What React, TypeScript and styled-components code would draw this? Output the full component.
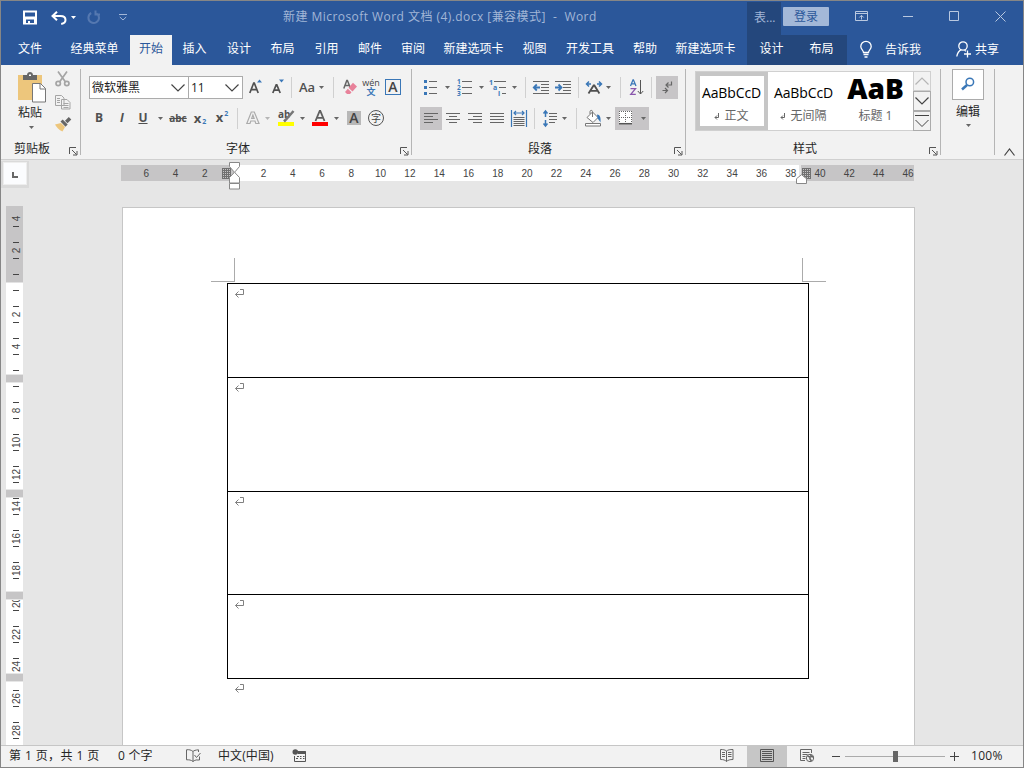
import React from "react";
import styled, { createGlobalStyle, css } from "styled-components";

const GlobalStyle = createGlobalStyle`
  * { box-sizing: border-box; }
  body {
    margin: 0;
    font-family: "Open Sans", "Noto Sans CJK SC", sans-serif;
    font-size: 12px;
    line-height: 16px;
    color: #262626;
    overflow: hidden;
  }
  svg { display: block; flex: none; overflow: visible; }
`;

const BLUE = "#2b579a";
const ACCENT = "#3a77b7";
const GREY = "#666";

/* ---------- window ---------- */

const Window = styled.div`
  width: 1024px;
  height: 768px;
  border: 1px solid #868686;
  background: #e6e6e6;
  display: flex;
  flex-direction: column;
`;

const TitleBar = styled.header`
  height: 34px;
  flex: none;
  background: ${BLUE};
  display: flex;
  align-items: center;
`;

const QuickAccess = styled.div`
  width: 282px;
  padding: 0 0 1px 21px;
  display: flex;
  align-items: center;
`;

const Spacer = styled.span<{ $w: number }>`
  width: ${(p) => p.$w}px;
  flex: none;
`;

const WindowTitle = styled.div`
  width: 464px;
  color: #a2b6d7;
  font-size: 12px;
  letter-spacing: 0.45px;
  white-space: pre;
  padding-bottom: 2px;
`;

const ContextTitle = styled.div`
  width: 34px;
  height: 33px;
  margin-top: 1px;
  padding: 8px 0 0 7px;
  background: #24477c;
  color: #a2b6d7;
`;

const SignIn = styled.button`
  margin: 0 0 3px 2px;
  width: 46px;
  height: 19px;
  padding: 0;
  border: 0;
  border-radius: 1px;
  background: #a3b8d8;
  color: ${BLUE};
  font: inherit;
  line-height: 18px;
`;

const WindowButtons = styled.div`
  display: flex;
  padding: 0 0 3px 26px;
  align-items: center;
`;

/* ---------- tabs ---------- */

const TabRow = styled.nav`
  height: 30px;
  flex: none;
  background: ${BLUE};
  display: flex;
  color: #fff;
`;

const Tab = styled.div<{ $w: number; $kind?: string }>`
  width: ${(p) => p.$w}px;
  flex: none;
  display: flex;
  justify-content: center;
  padding-top: 6px;
  white-space: nowrap;
  ${(p) => p.$kind === "active" && css`background: #f2f2f2; color: ${BLUE};`}
  ${(p) => p.$kind === "context" && css`background: #24477c;`}
`;

const TabTool = styled.div<{ $left: number; $gap: number }>`
  display: flex;
  align-items: center;
  gap: ${(p) => p.$gap}px;
  padding: 0 0 1px ${(p) => p.$left}px;
`;

/* ---------- ribbon ---------- */

const Ribbon = styled.section`
  height: 95px;
  flex: none;
  background: #f2f2f2;
  border-bottom: 1px solid #d0d0d0;
  display: flex;
  padding-top: 4px;
`;

const Group = styled.div<{ $w: number }>`
  width: ${(p) => p.$w}px;
  height: 86px;
  flex: none;
  border-right: 1px solid #b5b5b5;
  display: flex;
  flex-direction: column;
`;

const GroupBody = styled.div<{ $left?: number }>`
  height: 70px;
  flex: none;
  padding-left: ${(p) => p.$left ?? 0}px;
  display: flex;
`;

const Rows = styled.div`
  padding-top: 7px;
  display: flex;
  flex-direction: column;
`;

const Row = styled.div`
  height: 31px;
  display: flex;
  align-items: flex-start;
`;

const GroupFooter = styled.div<{ $pad: number }>`
  height: 16px;
  display: flex;
  justify-content: space-between;
  padding: 0 2px 0 ${(p) => p.$pad}px;
  line-height: 20px;
`;

const Launcher = styled.span`
  padding-top: 8px;
`;

const Cell = styled.span<{ $w: number; $on?: boolean }>`
  width: ${(p) => p.$w}px;
  height: 23px;
  flex: none;
  display: flex;
  align-items: center;
  justify-content: center;
  padding-bottom: 1px;
  background: ${(p) => (p.$on ? "#c7c5c7" : "transparent")};
`;

const Divider = styled.span`
  width: 1px;
  height: 21px;
  margin-top: 1px;
  background: #d0d0d0;
  flex: none;
`;

const Letter = styled.span<{ $size?: number; $weight?: number; $italic?: boolean; $line?: string; $color?: string }>`
  font-size: ${(p) => p.$size ?? 12}px;
  font-weight: ${(p) => p.$weight ?? 700};
  font-style: ${(p) => (p.$italic ? "italic" : "normal")};
  text-decoration: ${(p) => p.$line ?? "none"};
  color: ${(p) => p.$color ?? "#505050"};
  line-height: 16px;
  white-space: nowrap;
`;

const ScriptX = styled.span<{ $down?: boolean }>`
  display: flex;
  align-items: ${(p) => (p.$down ? "flex-end" : "flex-start")};
  gap: 1px;
  height: 18px;
  padding: ${(p) => (p.$down ? "0 0 2px" : "1px 0 0")};
  color: #505050;
  font-weight: 700;
  font-size: 13px;
  line-height: 14px;
`;

const ScriptTwo = styled.span<{ $down?: boolean }>`
  color: ${ACCENT};
  font-size: 7px;
  line-height: ${(p) => (p.$down ? 6 : 8)}px;
`;

const Combo = styled.div<{ $w: number }>`
  width: ${(p) => p.$w}px;
  height: 23px;
  margin-right: -1px;
  border: 1px solid #ababab;
  background: #fff;
  display: flex;
  align-items: center;
  justify-content: space-between;
  padding: 0 3px 0 2px;
  color: #222;
`;

const PasteButton = styled.div`
  width: 30px;
  padding-top: 3px;
  display: flex;
  flex-direction: column;
  align-items: center;
`;

const PasteLabel = styled.span`
  line-height: 18px;
  margin: 1px 4px 4px 0;
`;

const PasteCaret = styled.span`
  margin-right: 2px;
`;

const EditLabel = styled.span`
  line-height: 17px;
  margin-bottom: 4px;
`;

const ClipTools = styled.div`
  padding: 2px 0 0 8px;
  display: flex;
  flex-direction: column;
  gap: 8px;
`;

const Gallery = styled.div`
  width: 236px;
  height: 60px;
  margin-top: 2px;
  border: 1px solid #d0d0d0;
  background: #fff;
  display: flex;
`;

const StyleItem = styled.div<{ $w: number; $on?: boolean }>`
  width: ${(p) => p.$w}px;
  height: 58px;
  flex: none;
  border: 4px solid ${(p) => (p.$on ? "#c6c6c6" : "transparent")};
  display: flex;
  flex-direction: column;
  align-items: center;
`;

const StyleSample = styled.span<{ $big?: boolean }>`
  height: 32px;
  margin-left: -1px;
  color: #000;
  white-space: nowrap;
  font-size: ${(p) => (p.$big ? 28 : 14)}px;
  font-weight: ${(p) => (p.$big ? 800 : 400)};
  line-height: ${(p) => (p.$big ? 25 : 33)}px;
  letter-spacing: ${(p) => (p.$big ? 0 : -0.1)}px;
`;

const StyleName = styled.span`
  display: flex;
  align-items: center;
  gap: 4px;
  margin-left: -1px;
  color: #666;
  line-height: 16px;
`;

const Scroller = styled.div`
  margin: -1px -1px -1px auto;
  width: 18px;
  display: flex;
  flex-direction: column;
`;

const ScrollButton = styled.div<{ $off?: boolean }>`
  flex: 1;
  border: 1px solid ${(p) => (p.$off ? "#d0d0d0" : "#ababab")};
  background: #f2f2f2;
  display: flex;
  align-items: center;
  justify-content: center;
`;

const EditGroup = styled.div`
  width: 54px;
  height: 86px;
  padding-left: 1px;
  border-right: 1px solid #b5b5b5;
  display: flex;
  flex-direction: column;
  align-items: center;
`;

const FindBox = styled.div`
  width: 32px;
  height: 31px;
  margin-bottom: 3px;
  border: 1px solid #ababab;
  background: #fff;
  display: flex;
  align-items: center;
  justify-content: center;
  padding-bottom: 2px;
`;

const Collapse = styled.div`
  padding: 79px 0 0 9px;
`;

/* ---------- workspace ---------- */

const Workspace = styled.main`
  height: 585px;
  flex: none;
  display: flex;
  overflow: hidden;
`;

const RulerColumn = styled.aside`
  width: 120px;
  flex: none;
`;

const TabStop = styled.div`
  width: 28px;
  height: 27px;
  margin-top: 1px;
  padding: 1px 2px 2px 2px;
  background: #dadada;
`;

const TabStopFace = styled.div`
  height: 23px;
  border: 1px solid #eee;
  background: #fbfcfe;
  display: flex;
  align-items: center;
  justify-content: center;
  padding-top: 3px;
`;

const VRuler = styled.div`
  position: relative;
  width: 17px;
  height: 539px;
  margin: 18px 0 0 5px;
  overflow: hidden;
  background: linear-gradient(#c6c5c6 76px, #fff 77px);
`;

const VMarks = styled.div`
  margin-top: -4px;
`;

const VMark = styled.div`
  height: 32px;
  padding: 8px 0 7px 7px;
  display: flex;
  flex-direction: column;
  justify-content: space-between;
  &::before, &::after {
    content: "";
    width: 6px;
    height: 1px;
    background: #444;
  }
  &:first-child::before {
    background: transparent;
  }
`;

const VNumber = styled.span`
  width: 7px;
  height: 13px;
  display: flex;
  align-items: center;
  justify-content: center;
  font: 10px/13px "Liberation Sans", sans-serif;
  color: #444;
  transform: rotate(-90deg);
`;

const VBand = styled.div<{ $top: number }>`
  position: absolute;
  left: 0;
  top: ${(p) => p.$top}px;
  width: 17px;
  height: 9px;
  background: #c6c5c6;
  border: solid #e6e6e6;
  border-width: 1px 0;
`;

const PageColumn = styled.div`
  width: 795px;
  flex: none;
`;

const HRuler = styled.div`
  position: relative;
  height: 16px;
  width: 793px;
  margin-top: 5px;
  background: linear-gradient(90deg, #c6c5c6 113px, #fff 113px 678px, #e6e6e6 678px 680px, #c6c5c6 680px);
`;

const HMarks = styled.div`
  display: flex;
  width: 793px;
  padding-left: 10.6px;
  overflow: hidden;
`;

const HNumber = styled.span`
  width: 29.3px;
  flex: none;
  text-align: center;
  font: 10px/17px "Liberation Sans", sans-serif;
  color: #444;
`;

const Marker = styled.span<{ $x: number; $y: number }>`
  position: absolute;
  left: ${(p) => p.$x}px;
  top: ${(p) => p.$y}px;
`;

const Page = styled.article`
  width: 793px;
  height: 560px;
  margin: 26px 0 0 1px;
  padding-top: 50px;
  border: 1px solid #c6c6c6;
  background: #fff;
`;

const Crops = styled.div`
  display: flex;
  justify-content: space-between;
  width: 615px;
  margin: 0 0 1px 88px;
`;

const Crop = styled.span<{ $side: "left" | "right" }>`
  width: 24px;
  height: 24px;
  border-bottom: 1px solid #ababab;
  ${(p) => (p.$side === "left" ? "border-right" : "border-left")}: 1px solid #ababab;
`;

const Table = styled.div`
  width: 582px;
  margin-left: 104px;
  border: solid #000;
  border-width: 1px 1px 0;
`;

const TableRow = styled.div<{ $h: number }>`
  height: ${(p) => p.$h}px;
  border-bottom: 1px solid #000;
  padding: 5px 0 0 7px;
`;

const AfterTable = styled.div`
  padding: 5px 0 0 112px;
`;

/* ---------- status bar ---------- */

const StatusBar = styled.footer`
  height: 22px;
  flex: none;
  border-top: 1px solid #c6c6c6;
  background: #f2f2f2;
  display: flex;
  align-items: center;
  padding-left: 8px;
`;

const StatusText = styled.span<{ $w: number; $track?: number }>`
  width: ${(p) => p.$w}px;
  flex: none;
  white-space: pre;
  letter-spacing: ${(p) => p.$track ?? 0}px;
  line-height: 16px;
  padding-bottom: 1px;
`;

const StatusIcon = styled.span`
  padding-bottom: 2px;
`;

const StatusCell = styled.span<{ $w: number; $on?: boolean }>`
  width: ${(p) => p.$w}px;
  height: 21px;
  flex: none;
  display: flex;
  align-items: center;
  justify-content: center;
  padding-bottom: 2px;
  background: ${(p) => (p.$on ? "#c6c6c6" : "transparent")};
`;

const Zoom = styled.div`
  display: flex;
  align-items: center;
  padding: 0 12px 1px 5px;
`;

const Track = styled.div`
  width: 100px;
  height: 11px;
  margin: 0 5px 0 5px;
  display: flex;
  justify-content: center;
  background: linear-gradient(transparent 5px, #ababab 5px 6px, transparent 6px);
`;

const Thumb = styled.span`
  width: 5px;
  height: 11px;
  background: #666;
`;

/* ---------- drawings ---------- */

const Caret = ({ color = GREY }: { color?: string }) => (
  <svg width="5" height="3"><path d="M0 0h5L2.500 3z" fill={color} /></svg>
);

const Chevron = ({ up, w = 14, color = "#444" }: { up?: boolean; w?: number; color?: string }) => (
  <svg width={w} height="8" viewBox={`0 0 ${w} 8`} fill="none" stroke={color} strokeWidth="1.2">
    <path d={up ? `M.5 7.5 ${w / 2} 1 ${w - 0.5} 7.5` : `M.5 .5 ${w / 2} 7 ${w - 0.5} .5`} />
  </svg>
);

const Lines = ({ rows }: { rows: [number, number][] }) => (
  <svg width="14" height="10" fill="none" stroke={GREY}>
    {rows.map(([a, b], i) => <path key={i} d={`M${a} ${i * 3 + 0.5}H${b}`} />)}
  </svg>
);

const ReturnMark = () => (
  <svg width="9" height="10" fill="none" stroke="#808080">
    <path d="M5 .5H8.500V5.500H.5M3.500 2.500.5 5.500 3.500 8.500" />
  </svg>
);

const StyleMark = () => (
  <svg width="6" height="8" fill="none" stroke="#666">
    <path d="M4.500 1V5.500H1M3 3.500 1 5.500 3 7.500" />
  </svg>
);

const LauncherIcon = () => (
  <svg width="9" height="9" fill="none" stroke="#555">
    <path d="M.5 7V.5H7M3 3l4.500 4.500M8 4v4H4" />
  </svg>
);

const SaveIcon = () => (
  <svg width="15" height="15" fill="#fff">
    <path fillRule="evenodd" d="M1 .5h14v14H1zM3 2.500v4h10v-4zM4 9.500v3.500h2v-2h2v2h4V9.500z" />
  </svg>
);

const UndoIcon = () => (
  <svg width="16" height="14" fill="none" stroke="#fff" strokeWidth="2">
    <path d="M6 .7 1.500 5l4.500 4.300M2 5h7.500c3.500 0 5 1.800 5 4 0 2.400-1.800 3.500-4.300 4" />
  </svg>
);

const RedoIcon = () => (
  <svg width="13" height="15" fill="none" stroke="#5578b0" strokeWidth="2">
    <path d="M4.200 3A5.300 5.300 0 1 0 12 8c0-2-1-3.600-2.500-4.500M8.500 .5v4H13" />
  </svg>
);

const CustomizeIcon = () => (
  <svg width="8" height="7" fill="none" stroke="#a2b6d7">
    <path d="M0 .5h8M.8 3 4 6 7.200 3" />
  </svg>
);

const PasteIcon = () => (
  <svg width="28" height="31">
    <path d="M0 3h24v25H0z" fill="#edc67c" />
    <path d="M5 3h4c0-4 6-4 6 0h4v5H5z" fill="#666" />
    <path d="M11 2.500h2V4H11z" fill="#fff" />
    <path d="M14.500 11.500h8l5 5v13.500h-13z" fill="#fff" stroke="#777" />
    <path d="M22 11.500v5.500h5.500" fill="none" stroke="#777" />
  </svg>
);

const CutIcon = () => (
  <svg width="15" height="16" fill="none" stroke="#a5a5a5" strokeWidth="1.700">
    <path d="M3 .5 10.500 11M12 .5 4.500 11" />
    <circle cx="3.200" cy="12.500" r="2.200" /><circle cx="11.800" cy="12.500" r="2.200" />
  </svg>
);

const CopyIcon = () => (
  <svg width="16" height="15" fill="#f2f2f2" stroke="#a5a5a5">
    <path d="M.5 .5h6l2.500 2.500v7.500H.5zM6.500 4.500h5.500l3 3v6.500H6.500z" />
    <path d="M2 3.500h3M2 5.500h3M2 7.500h3M8.500 8.500h5M8.500 10.500h5M8.500 12.500h5" />
  </svg>
);

const PainterIcon = () => (
  <svg width="17" height="15">
    <path d="M0 6.500 6 5l4 4-2.500 4.500C4 12 1.500 9 0 6.500z" fill="#edc67c" />
    <path d="M5.500 3.500 10.500 8.800l2.200-2.200-5-5.200zM10 2.800 13.800 -1l2.500 2.500L12.500 5.300z" fill="#666" />
  </svg>
);

const GrowIcon = ({ shrink }: { shrink?: boolean }) => (
  <svg width="13" height="16" fill="none">
    <path d={shrink ? "M.8 14 4.200 5.800h.6l3.400 8.200M2.200 11.200h4.600" : "M.8 14 4.700 4h.6l3.900 10M2.200 10.700h5.600"} stroke="#505050" strokeWidth="1.700" />
    <path d={shrink ? "M7 .5h5L9.500 3.500z" : "M8 3.500h5L10.500 .5z"} fill={ACCENT} />
  </svg>
);

const EraserIcon = () => (
  <svg width="14" height="16">
    <path d="M.8 9.500 3.800 1.500h.6L7 8M2.200 6.500h4" fill="none" stroke="#666" strokeWidth="1.500" />
    <path d="M10 3.800 14 7.500l-4.500 5L5.500 8.800z" fill="#e8829a" />
    <path d="M4.800 9.800 8.500 13.200 7 15H4l-2-2z" fill="#e8829a" />
  </svg>
);

const Pinyin = styled.span`
  display: flex;
  flex-direction: column;
  align-items: center;
  color: #444;
  font-size: 9px;
  line-height: 9px;
`;

const PinyinHan = styled.span`
  color: ${ACCENT};
  font-size: 9px;
  font-weight: 700;
  line-height: 9px;
`;

const BoxedLetter = styled.span<{ $kind: "box" | "shade" | "circle" }>`
  display: flex;
  align-items: center;
  justify-content: center;
  width: 16px;
  height: 16px;
  font-size: 14px;
  font-weight: 600;
  line-height: 14px;
  color: #444;
  ${(p) => p.$kind === "box" && css`border: 1px solid ${ACCENT};`}
  ${(p) => p.$kind === "shade" && css`width: 14px; height: 14px; background: #b8b8b8;`}
  ${(p) => p.$kind === "circle" && css`border: 1px solid #555; border-radius: 8px; font-size: 10px; font-weight: 400;`}
`;

const ColourBar = styled.span<{ $color: string }>`
  width: 16px;
  height: 16px;
  border-bottom: 4px solid ${(p) => p.$color};
  display: flex;
  justify-content: center;
`;

const FontA = () => (
  <svg width="12" height="11" fill="none" stroke="#606060" strokeWidth="1.800">
    <path d="M1.500 11 5.700 1h.6l4.200 10M3 7.800h6" />
  </svg>
);

const HighlightIcon = () => (
  <svg width="16" height="12">
    <text x="0" y="8" fontSize="10" fontWeight="700" fill="#505050">ab</text>
    <path d="M15.500 1 9 8.500 6 11.500" stroke="#777" strokeWidth="2.500" fill="none" />
  </svg>
);

const OutlineA = () => (
  <svg width="14" height="14" fill="none" stroke="#ababab" strokeWidth="1.200">
    <path d="M.8 12.500 5.300 1h3l4.700 11.500H9.800L9 10H4.800L4 12.500zM5.700 7.500h2.400L6.900 4z" />
  </svg>
);

const BulletsIcon = () => (
  <svg width="13" height="15" shapeRendering="crispEdges">
    {[1, 7, 13].map((y) => (
      <g key={y}><rect x="0" y={y - 1} width="3" height="3" fill={ACCENT} /><path d={`M5 ${y + 0.5}h8`} stroke={GREY} /></g>
    ))}
  </svg>
);

const NumbersIcon = () => (
  <svg width="15" height="17">
    {[1, 2, 3].map((n) => (
      <g key={n}>
        <text x="0" y={n * 6 - 1} fontSize="6.500" fontWeight="700" fill={ACCENT}>{n}</text>
        <path d={`M5 ${n * 6 - 3.5}h10`} stroke={GREY} />
      </g>
    ))}
  </svg>
);

const MultiIcon = () => (
  <svg width="17" height="17">
    <g fontSize="7" fontWeight="700" fill={ACCENT}>
      <text x="0" y="5.500">1</text><text x="4" y="11">a</text><text x="9" y="17">i</text>
    </g>
    <path d="M5 2.500h12M10 8.500h7M13 14.500h4" stroke={GREY} />
  </svg>
);

const IndentIcon = ({ right }: { right?: boolean }) => (
  <svg width="16" height="13" fill="none">
    <path d="M0 .5h16M8 3.500h8M8 6.500h8M8 9.500h8M0 12.500h16" stroke={GREY} />
    <path d={right ? "M0 6.500h6M3.500 3.500l3 3-3 3" : "M7 6.500H1M3.800 3.500l-3 3 3 3"} stroke={ACCENT} strokeWidth="1.800" />
  </svg>
);

const AsianLayoutIcon = () => (
  <svg width="16" height="13" fill="none">
    <path d="M2.500 12.500 7.600 4.500h.8l5 8M4.500 9.800h7" stroke="#505050" strokeWidth="1.800" />
    <path d="M1 3h4M3 .5.500 3 3 5.500M15 3h-4M13 .5 15.500 3 13 5.500" stroke={ACCENT} strokeWidth="1.500" />
  </svg>
);

const SortIcon = () => (
  <svg width="14" height="17" fill="none">
    <path d="M.5 7 3 .8h.4L6 7M1.500 4.800h3.500" stroke={ACCENT} strokeWidth="1.300" />
    <path d="M.5 9.700h5L.8 15.300h5" stroke="#8a57ad" strokeWidth="1.300" />
    <path d="M10.500 1v14M7.800 12l2.700 3 2.700-3" stroke="#555" />
  </svg>
);

const MarksIcon = () => (
  <svg width="11" height="13" fill="none" stroke="#666" strokeWidth="1.200">
    <path d="M9.500 .5v3.500H4M6.500 1.500 4 4l2.500 2.500M.5 9.500h5M3 7l2.500 2.500L3 12" />
  </svg>
);

const DistributeIcon = () => (
  <svg width="16" height="17" fill="none">
    <path d="M.5 0v17M15.500 0v17M3 3h10M5 1 3 3l2 2M11 1l2 2-2 2" stroke={ACCENT} strokeWidth="1.200" />
    <path d="M2.500 7.500h11M2.500 9.500h11M2.500 11.500h11M2.500 13.500h11M2.500 15.500h11" stroke={GREY} />
  </svg>
);

const SpacingIcon = () => (
  <svg width="14" height="17" fill="none">
    <path d="M2.500 1v6M.5 3.500l2-2.500 2 2.500M2.500 10v6M.5 13.500l2 2.500 2-2.500" stroke={ACCENT} strokeWidth="1.500" />
    <path d="M6 3.500h8M6 6.500h8M6 9.500h8M6 12.500h6" stroke={GREY} />
  </svg>
);

const ShadingIcon = () => (
  <svg width="17" height="17" fill="none" stroke="#777">
    <path d="M2 7.500 7.500 2 13 7.500 8 12.500z" fill="#fff" />
    <path d="M7.500 7V1.500c0-1.500-2.500-1.500-2.500 0V4" />
    <path d="M12 4.500c3 0 4 3 3.500 8-1-2-2-3-3-4z" fill={ACCENT} stroke="none" />
    <path d="M.5 13.500h15v2.500H.5z" fill="#fff" />
  </svg>
);

const BordersIcon = () => (
  <svg width="14" height="14" fill="none">
    <path d="M0 0h13v13H0z" fill="#fff" />
    <path d="M.5 0v13M6.500 0v13M12.500 0v13M0 .5h13M0 6.500h13" stroke="#666" strokeDasharray="1 1" />
    <path d="M0 12.700h13" stroke="#555" strokeWidth="1.500" />
  </svg>
);

const FindIcon = () => (
  <svg width="14" height="14" fill="none" stroke={ACCENT}>
    <circle cx="8.800" cy="5" r="3.800" strokeWidth="1.500" />
    <path d="M6 8 1 12.500" strokeWidth="2.500" />
  </svg>
);

const RibbonModeIcon = () => (
  <svg width="13" height="11" fill="none" stroke="#b9c8e0">
    <path d="M.5 .5h12v9H.5zM.5 2.500h12M6.500 8.500V4.500M4.300 6.500 6.500 4.300l2.200 2.200" />
  </svg>
);

const BulbIcon = () => (
  <svg width="12" height="17" fill="none" stroke="#fff" strokeWidth="1.300">
    <path d="M3.500 11.500C3.500 9 .8 8.500.8 5.500a5.200 5.200 0 0 1 10.400 0c0 3-2.700 3.500-2.700 6zM3.500 13.500h5M4.500 16h3" />
  </svg>
);

const ShareIcon = () => (
  <svg width="15" height="17" fill="none" stroke="#fff" strokeWidth="1.300">
    <circle cx="7" cy="5" r="4.200" />
    <path d="M.8 15.500c.5-3 2-5.500 4.500-6.800M8.500 9.200l1.500 1M11.500 9.500v7M8 13h7" />
  </svg>
);

const IndentMarker = () => (
  <svg width="11" height="28" fill="#fff" stroke="#888">
    <path d="M.5 .5h10v4L6 9.800v1l4.500 4.700v5.500H.5v-5.500L5 10.800v-1L.5 4.500zM.5 21.500h10v5.500H.5z" />
  </svg>
);

const RightMarker = () => (
  <svg width="11" height="10" fill="#fff" stroke="#888"><path d="M5.500 .7l5 4v4.800H.5V4.700z" /></svg>
);

const GridMarker = () => (
  <svg width="9" height="11" stroke="#707070" shapeRendering="crispEdges">
    <path d="M.5 0v11M2.500 0v11M4.500 0v11M6.500 0v11M8.500 0v11M0 .5h9M0 2.500h9M0 4.500h9M0 6.500h9M0 8.500h9M0 10.500h9" />
  </svg>
);

const ProofIcon = () => (
  <svg width="15" height="13" fill="none" stroke="#666">
    <path d="M7 2.500C5 .8 3 .5.500 .8v10c2.500 0 4.500 0 6.500 1.700 1-1 2.500-1.500 4-1.700M7 2.500v10M7 2.500C8 1.500 9.500 1 12.500 .8V3M8.500 6l2 2.500L14.500 4M13.500 7.500v3.500H11" />
  </svg>
);

const MacroIcon = () => (
  <svg width="14" height="13" fill="none" stroke="#555">
    <path d="M6 2.500h7.500v10h-11V7M6 4.500h7.500" />
    <path d="M6 3h7.500" strokeWidth="2" />
    <path d="M5 7.500h2M8 7.500h1.500M11 7.500h1.500M4 9.500h2M8 9.500h1.500M11 9.500h1.500" />
    <circle cx="3.300" cy="3" r="2.800" fill="#555" stroke="none" />
  </svg>
);

const ReadIcon = () => (
  <svg width="14" height="13" fill="none" stroke="#666">
    <path d="M6.500 2C5 .8 3 .5.500 .5v10c3 0 4.500 .5 6 2 1.500-1.500 3.500-2 6.500-2V.5c-3 0-5 .3-6.500 1.500v10.500M2 3.500h3M2 5.500h3M2 7.500h3M8 3.500h3.500M8 5.500h3.500M8 7.500h3.500" />
  </svg>
);

const PrintIcon = () => (
  <svg width="14" height="13" fill="none" stroke="#555">
    <path d="M.5 .5h13v12H.5zM2 2.500h10M2 4.500h10M2 6.500h10M2 8.500h10M2 10.500h10" />
  </svg>
);

const WebIcon = () => (
  <svg width="14" height="13" fill="none" stroke="#666">
    <path d="M11.500 4V.5H.5v11H5M2.500 3.500h7M2.500 5.500h5M2.500 7.500h3M2.500 9.500h3" />
    <circle cx="10" cy="9" r="3.700" />
    <path d="M7.500 7l2.500 1v2l1.500 2M10.500 5.500l1 2 2 .5" strokeWidth="1.600" />
  </svg>
);

/* ---------- data ---------- */

const tabs: [string, number, string?][] = [
  ["文件", 58], ["经典菜单", 71], ["开始", 42, "active"], ["插入", 45], ["设计", 44], ["布局", 43],
  ["引用", 45], ["邮件", 42], ["审阅", 44], ["新建选项卡", 77], ["视图", 45], ["开发工具", 66],
  ["帮助", 44], ["新建选项卡", 77], ["", 3], ["设计", 49, "context"], ["布局", 51, "context"],
];

const hNumbers = [6, 4, 2, 0, ...Array.from({ length: 23 }, (_, i) => (i + 1) * 2)];
const vNumbers = [4, 2, 0, ...Array.from({ length: 14 }, (_, i) => (i + 1) * 2)];
const rowHeights = [94, 114, 103, 84];

const Footer = ({ name, pad }: { name: string; pad: number }) => (
  <GroupFooter $pad={pad}>
    <span>{name}</span>
    <Launcher><LauncherIcon /></Launcher>
  </GroupFooter>
);

export default function App() {
  return (
    <Window>
      <GlobalStyle />
      <TitleBar>
        <QuickAccess>
          <SaveIcon /><Spacer $w={14} /><UndoIcon /><Spacer $w={4} /><Caret color="#fff" />
          <Spacer $w={11} /><RedoIcon /><Spacer $w={19} /><CustomizeIcon />
        </QuickAccess>
        <WindowTitle>新建 Microsoft Word 文档 (4).docx [兼容模式]  -  Word</WindowTitle>
        <ContextTitle>表...</ContextTitle>
        <SignIn>登录</SignIn>
        <WindowButtons>
          <RibbonModeIcon /><Spacer $w={35} />
          <svg width="11" height="11" stroke="#b9c8e0"><path d="M0 5.500h10" /></svg><Spacer $w={35} />
          <svg width="11" height="11" stroke="#b9c8e0" fill="none"><path d="M.5 .5h9v9H.5z" /></svg><Spacer $w={35} />
          <svg width="11" height="11" stroke="#b9c8e0"><path d="M.5 .5l10 10M10.500 .5l-10 10" /></svg>
        </WindowButtons>
      </TitleBar>

      <TabRow>
        {tabs.map(([name, w, kind], i) => <Tab key={i} $w={w} $kind={kind}>{name}</Tab>)}
        <TabTool $left={13} $gap={13}><BulbIcon /><span>告诉我</span></TabTool>
        <TabTool $left={35} $gap={4}><ShareIcon /><span>共享</span></TabTool>
      </TabRow>

      <Ribbon>
        <Group $w={80}>
          <GroupBody $left={16}>
            <PasteButton>
              <PasteIcon />
              <PasteLabel>粘贴</PasteLabel>
              <PasteCaret><Caret /></PasteCaret>
            </PasteButton>
            <ClipTools><CutIcon /><CopyIcon /><PainterIcon /></ClipTools>
          </GroupBody>
          <Footer name="剪贴板" pad={13} />
        </Group>

        <Group $w={331}>
          <GroupBody $left={8}>
            <Rows>
              <Row>
                <Combo $w={100}><span>微软雅黑</span><Chevron /></Combo>
                <Combo $w={55}><span>11</span><Chevron /></Combo>
                <Spacer $w={1} />
                <Cell $w={24}><GrowIcon /></Cell>
                <Cell $w={22}><GrowIcon shrink /></Cell>
                <Spacer $w={2} /><Divider /><Spacer $w={5} />
                <Cell $w={20}><Letter $size={13} $weight={600}>Aa</Letter></Cell>
                <Cell $w={9}><Caret /></Cell>
                <Spacer $w={7} /><Divider /><Spacer $w={6} />
                <Cell $w={20}><EraserIcon /></Cell>
                <Spacer $w={1} />
                <Cell $w={20}><Pinyin>wén<PinyinHan>文</PinyinHan></Pinyin></Cell>
                <Spacer $w={4} />
                <Cell $w={16}><BoxedLetter $kind="box">A</BoxedLetter></Cell>
              </Row>
              <Row>
                <Cell $w={20}><Letter>B</Letter></Cell>
                <Spacer $w={2} />
                <Cell $w={22}><Letter $italic>I</Letter></Cell>
                <Cell $w={20}><Letter $line="underline">U</Letter></Cell>
                <Spacer $w={1} />
                <Cell $w={12}><Caret /></Cell>
                <Cell $w={24}><Letter $size={10} $line="line-through">abc</Letter></Cell>
                <Cell $w={20}><ScriptX $down>x<ScriptTwo $down>2</ScriptTwo></ScriptX></Cell>
                <Spacer $w={2} />
                <Cell $w={20}><ScriptX>x<ScriptTwo>2</ScriptTwo></ScriptX></Cell>
                <Spacer $w={5} /><Divider /><Spacer $w={5} />
                <Cell $w={20}><OutlineA /></Cell>
                <Cell $w={9}><Caret color="#b5b5b5" /></Cell>
                <Spacer $w={4} />
                <Cell $w={20}><ColourBar $color="#ffff00"><HighlightIcon /></ColourBar></Cell>
                <Cell $w={12}><Caret /></Cell>
                <Spacer $w={2} />
                <Cell $w={20}><ColourBar $color="#ff0000"><FontA /></ColourBar></Cell>
                <Cell $w={12}><Caret /></Cell>
                <Spacer $w={5} />
                <Cell $w={14}><BoxedLetter $kind="shade">A</BoxedLetter></Cell>
                <Spacer $w={7} />
                <Cell $w={16}><BoxedLetter $kind="circle">字</BoxedLetter></Cell>
              </Row>
            </Rows>
          </GroupBody>
          <Footer name="字体" pad={145} />
        </Group>

        <Group $w={274}>
          <GroupBody $left={8}>
            <Rows>
              <Row>
                <Cell $w={21}><BulletsIcon /></Cell><Cell $w={12}><Caret /></Cell>
                <Cell $w={23}><NumbersIcon /></Cell><Cell $w={11}><Caret /></Cell>
                <Cell $w={21}><MultiIcon /></Cell><Cell $w={12}><Caret /></Cell>
                <Spacer $w={5} /><Divider /><Spacer $w={4} />
                <Cell $w={22}><IndentIcon /></Cell><Cell $w={22}><IndentIcon right /></Cell>
                <Spacer $w={4} /><Divider /><Spacer $w={5} />
                <Cell $w={20}><AsianLayoutIcon /></Cell><Cell $w={9}><Caret /></Cell>
                <Spacer $w={7} /><Divider /><Spacer $w={5} />
                <Cell $w={21}><SortIcon /></Cell>
                <Spacer $w={4} /><Divider /><Spacer $w={4} />
                <Cell $w={22} $on><MarksIcon /></Cell>
              </Row>
              <Row>
                <Cell $w={22} $on><Lines rows={[[0, 14], [0, 9], [0, 14], [0, 9]]} /></Cell>
                <Cell $w={22}><Lines rows={[[0, 14], [3, 11], [0, 14], [3, 11]]} /></Cell>
                <Cell $w={22}><Lines rows={[[0, 14], [5, 14], [0, 14], [5, 14]]} /></Cell>
                <Cell $w={22}><Lines rows={[[0, 14], [0, 14], [0, 14], [0, 14]]} /></Cell>
                <Cell $w={22}><DistributeIcon /></Cell>
                <Spacer $w={4} /><Divider /><Spacer $w={5} />
                <Cell $w={20}><SpacingIcon /></Cell><Cell $w={9}><Caret /></Cell>
                <Spacer $w={7} /><Divider /><Spacer $w={5} />
                <Cell $w={22}><ShadingIcon /></Cell><Cell $w={9}><Caret /></Cell>
                <Spacer $w={2} />
                <Cell $w={22} $on><BordersIcon /></Cell><Cell $w={12} $on><Caret /></Cell>
              </Row>
            </Rows>
          </GroupBody>
          <Footer name="段落" pad={116} />
        </Group>

        <Group $w={255}>
          <GroupBody $left={9}>
            <Gallery>
              <StyleItem $w={72} $on>
                <StyleSample>AaBbCcD</StyleSample>
                <StyleName><StyleMark />正文</StyleName>
              </StyleItem>
              <StyleItem $w={72}>
                <StyleSample>AaBbCcD</StyleSample>
                <StyleName><StyleMark />无间隔</StyleName>
              </StyleItem>
              <StyleItem $w={72}>
                <StyleSample $big>AaB</StyleSample>
                <StyleName>标题 1</StyleName>
              </StyleItem>
              <Scroller>
                <ScrollButton $off><Chevron up color="#b5b5b5" /></ScrollButton>
                <ScrollButton><Chevron /></ScrollButton>
                <ScrollButton>
                  <svg width="14" height="13" fill="none" stroke="#444"><path d="M0 .5h14M.5 5l6.500 6.500L13.500 5" /></svg>
                </ScrollButton>
              </Scroller>
            </Gallery>
          </GroupBody>
          <Footer name="样式" pad={107} />
        </Group>

        <EditGroup>
          <FindBox><FindIcon /></FindBox>
          <EditLabel>编辑</EditLabel>
          <Caret />
        </EditGroup>
        <Collapse><Chevron up w={11} /></Collapse>
      </Ribbon>

      <Workspace>
        <RulerColumn>
          <TabStop>
            <TabStopFace>
              <svg width="6" height="6"><path d="M1 0v5h5" fill="none" stroke="#666" strokeWidth="2" /></svg>
            </TabStopFace>
          </TabStop>
          <VRuler>
            <VMarks>
              {vNumbers.map((n, i) => <VMark key={i}><VNumber>{n || ""}</VNumber></VMark>)}
            </VMarks>
            {[168, 283, 385, 467].map((t) => <VBand key={t} $top={t} />)}
          </VRuler>
        </RulerColumn>
        <PageColumn>
          <HRuler>
            <HMarks>
              {hNumbers.map((n, i) => <HNumber key={i}>{n || ""}</HNumber>)}
            </HMarks>
            <Marker $x={101} $y={3}><GridMarker /></Marker>
            <Marker $x={108} $y={-3}><IndentMarker /></Marker>
            <Marker $x={681} $y={3}><GridMarker /></Marker>
            <Marker $x={675} $y={9}><RightMarker /></Marker>
          </HRuler>
          <Page>
            <Crops><Crop $side="left" /><Crop $side="right" /></Crops>
            <Table>
              {rowHeights.map((h) => <TableRow key={h} $h={h}><ReturnMark /></TableRow>)}
            </Table>
            <AfterTable><ReturnMark /></AfterTable>
          </Page>
        </PageColumn>
      </Workspace>

      <StatusBar>
        <StatusText $w={109} $track={0.4}>第 1 页，共 1 页</StatusText>
        <StatusText $w={68} $track={0.2}>0 个字</StatusText>
        <StatusIcon><ProofIcon /></StatusIcon><Spacer $w={17} />
        <StatusText $w={74} $track={0.1}>中文(中国)</StatusText>
        <StatusIcon><MacroIcon /></StatusIcon><Spacer $w={401} />
        <StatusCell $w={40}><ReadIcon /></StatusCell>
        <StatusCell $w={40} $on><PrintIcon /></StatusCell>
        <StatusCell $w={40}><WebIcon /></StatusCell>
        <Zoom>
          <svg width="8" height="9" stroke="#444"><path d="M0 4.500h8" /></svg>
          <Track><Thumb /></Track>
          <svg width="9" height="9" stroke="#444"><path d="M0 4.500h9M4.500 0v9" /></svg>
        </Zoom>
        <StatusText $w={40} $track={0.3}>100%</StatusText>
      </StatusBar>
    </Window>
  );
}
